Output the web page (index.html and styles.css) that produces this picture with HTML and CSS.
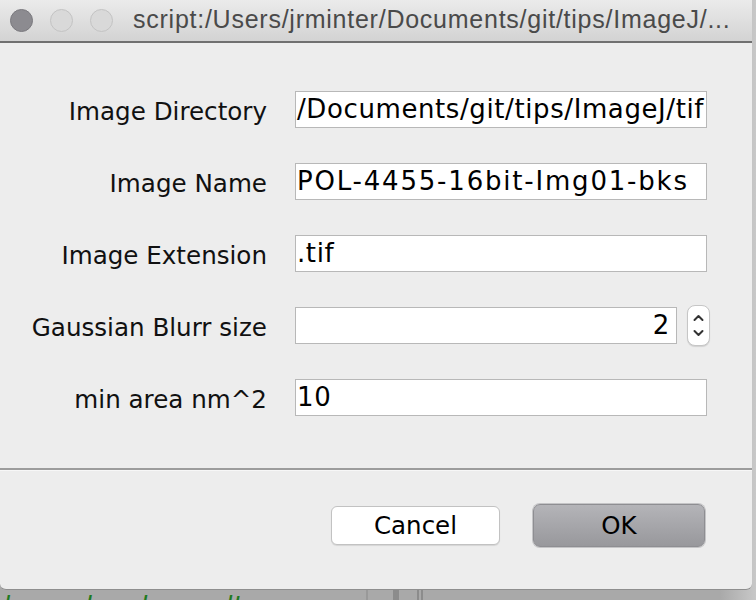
FILE: index.html
```html
<!DOCTYPE html>
<html>
<head>
<meta charset="utf-8">
<link rel="stylesheet" href="styles.css">
</head>
<body>
<div class="window">
  <div class="titlebar">
    <div class="lights">
      <span class="light close"></span>
      <span class="light"></span>
      <span class="light"></span>
    </div>
    <div class="title">script:/Users/jrminter/Documents/git/tips/ImageJ/...</div>
  </div>
  <div class="panel">
    <div class="row">
      <label class="label">Image Directory</label>
      <div class="field">/Documents/git/tips/ImageJ/tif</div>
    </div>
    <div class="row">
      <label class="label">Image Name</label>
      <div class="field spaced">POL-4455-16bit-Img01-bks</div>
    </div>
    <div class="row">
      <label class="label">Image Extension</label>
      <div class="field">.tif</div>
    </div>
    <div class="row">
      <label class="label">Gaussian Blurr size</label>
      <div class="field num">2</div>
      <div class="spinner">
        <svg width="23" height="41" viewBox="0 0 23 41">
          <path d="M7.5 15 L11.5 11 L15.5 15" fill="none" stroke="#333" stroke-width="2" stroke-linecap="round" stroke-linejoin="round"/>
          <path d="M7.5 26 L11.5 30 L15.5 26" fill="none" stroke="#333" stroke-width="2" stroke-linecap="round" stroke-linejoin="round"/>
        </svg>
      </div>
    </div>
    <div class="row">
      <label class="label">min area nm^2</label>
      <div class="field">10</div>
    </div>
  </div>
  <div class="sep"></div>
  <div class="buttons">
    <button class="btn cancel">Cancel</button>
    <button class="btn ok">OK</button>
  </div>
</div>
<div class="behind">
  <span class="code">l&#8195;&#8195;&#8194;d&#8195;&#8194;d&#8195;&#8195;&#8195;lt</span>
</div>
</body>
</html>
```
FILE: styles.css
```css
html, body {
  margin: 0;
  padding: 0;
}
body {
  width: 756px;
  height: 600px;
  overflow: hidden;
  background: linear-gradient(to right, #a9a9a9 0, #a9a9a9 720px, #c8c8c8 756px);
}
.window {
  width: 752px;
  height: 590px;
  background: #ededed;
  border-radius: 0 0 6px 6px;
  border-bottom: 1px solid #8e8e8e;
  box-sizing: border-box;
  overflow: hidden;
  display: flex;
  flex-direction: column;
}
.titlebar {
  height: 43px;
  box-sizing: border-box;
  flex: none;
  background: linear-gradient(to bottom, #ebebeb, #d3d3d3);
  border-bottom: 2px solid #707070;
  display: flex;
  align-items: center;
  padding-left: 10px;
}
.lights {
  display: flex;
  gap: 17px;
  margin-top: -1px;
}
.light {
  width: 23px;
  height: 23px;
  border-radius: 50%;
  box-sizing: border-box;
  border: 1px solid #c3c3c3;
  background: #d9d9d9;
}
.light.close {
  background: #8c8b90;
  border-color: #7a797e;
}
.title {
  margin-left: 20px;
  font-family: "Liberation Sans", Arial, sans-serif;
  font-size: 25px;
  letter-spacing: 0.75px;
  color: #4a4a4a;
  white-space: nowrap;
  margin-top: -2px;
}
.panel {
  height: 425px;
  flex: none;
  box-sizing: border-box;
  padding-top: 48px;
  display: flex;
  flex-direction: column;
  gap: 35px;
}
.row {
  display: flex;
  align-items: center;
  height: 37px;
}
.label {
  width: 267px;
  text-align: right;
  font-family: "DejaVu Sans", sans-serif;
  font-size: 24.6px;
  color: #111;
  flex: none;
  margin-top: 4px;
}
.field {
  margin-left: 28px;
  width: 412px;
  height: 37px;
  box-sizing: border-box;
  border: 1px solid #b8b8b8;
  background: #fff;
  font-family: "DejaVu Sans", sans-serif;
  font-size: 26px;
  letter-spacing: 0.6px;
  line-height: 35px;
  padding: 0 1px;
  color: #000;
  white-space: nowrap;
  overflow: hidden;
}
.field.spaced {
  letter-spacing: 1.8px;
}
.field.num {
  width: 382px;
  text-align: right;
  padding-right: 6px;
}
.spinner {
  margin-left: 10px;
  width: 23px;
  height: 41px;
  box-sizing: border-box;
  border: 1px solid #c6c6c6;
  border-radius: 8px;
  background: #fff;
  box-shadow: 0 1px 1px rgba(0,0,0,0.12);
  display: flex;
}
.spinner svg {
  margin: -1px;
}
.sep {
  height: 3px;
  flex: none;
  border-top: 2px solid #9c9c9c;
  background: #f7f7f7;
  box-sizing: border-box;
}
.buttons {
  flex: 1;
  display: flex;
  justify-content: flex-end;
  align-items: flex-start;
  padding-top: 33px;
  padding-right: 47px;
  gap: 33px;
}
.btn {
  font-family: "DejaVu Sans", sans-serif;
  font-size: 24.5px;
  color: #000;
  box-sizing: border-box;
  padding: 0;
  margin: 0;
}
.cancel {
  width: 169px;
  height: 39px;
  margin-top: 2px;
  background: #fff;
  border: 1px solid #c2c2c2;
  border-radius: 6px;
  box-shadow: 0 1px 1px rgba(0,0,0,0.1);
}
.ok {
  width: 172px;
  height: 43px;
  background: linear-gradient(to bottom, #b4b4b8, #98989c);
  border: 1px solid #8e8e92;
  border-radius: 7px;
  box-shadow: 0 0 0 1px #c4c4c6;
}
.behind {
  height: 10px;
  overflow: hidden;
  background-image: linear-gradient(to right,
    transparent 366px, #999 366px, #999 368px, transparent 368px,
    transparent 393px, #8c8c8c 393px, #8c8c8c 399px, transparent 399px,
    transparent 417px, #8c8c8c 417px, #8c8c8c 419px, transparent 419px,
    transparent 421px, #8c8c8c 421px, #8c8c8c 423px, transparent 423px);
}
.code {
  display: block;
  margin-top: 3px;
  padding-left: 3px;
  font-family: "DejaVu Sans", sans-serif;
  font-style: italic;
  font-size: 26px;
  line-height: 26px;
  color: #1f7a1f;
  white-space: pre;
}
```
